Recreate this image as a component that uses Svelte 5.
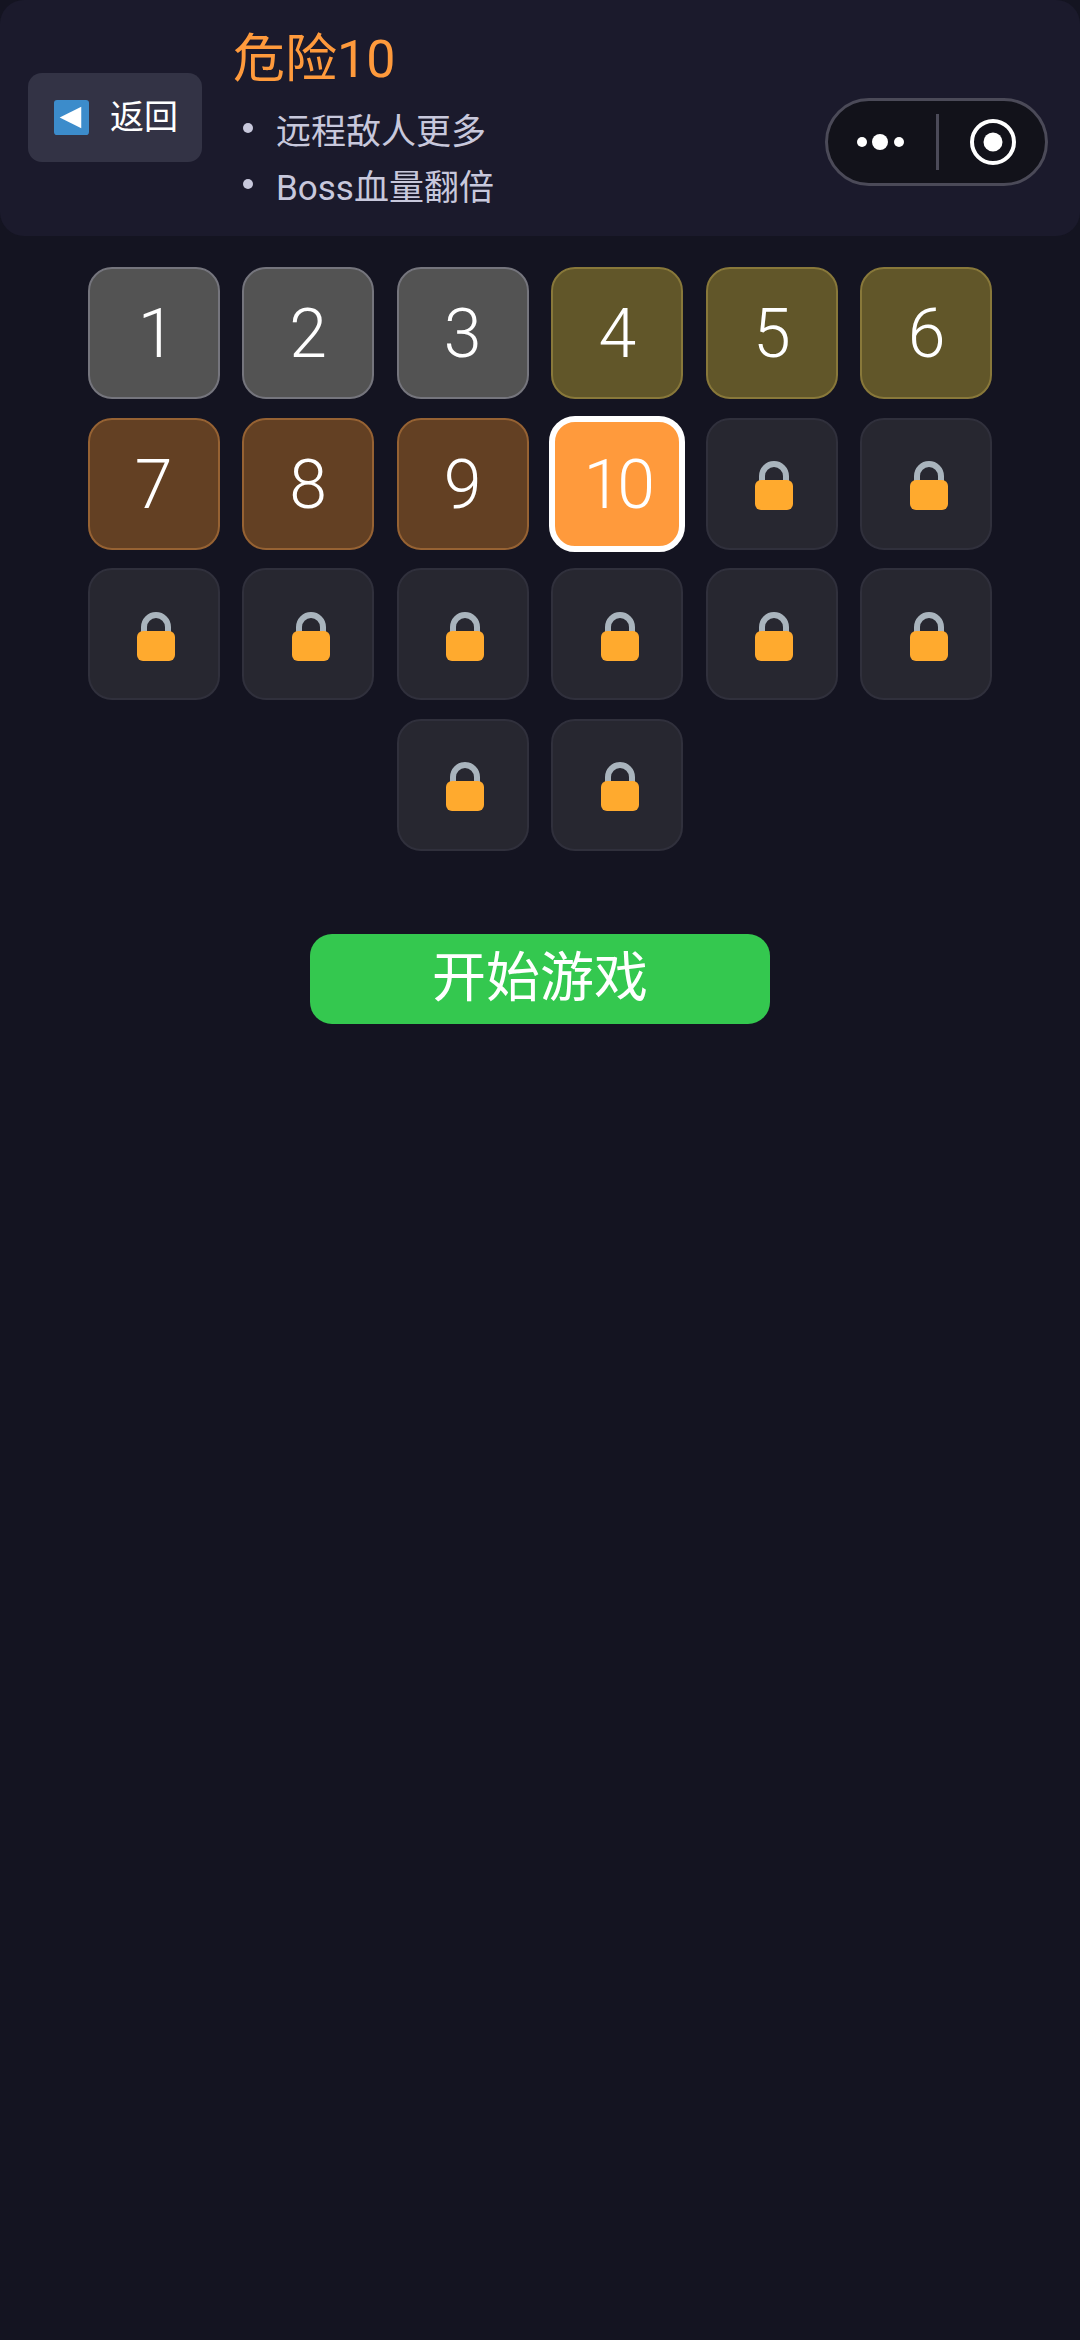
<script>
  const tiles = Array.from({ length: 20 }, (_, i) => {
    const n = i + 1;
    let kind = 'locked';
    if (n <= 3) kind = 'easy';
    else if (n <= 6) kind = 'mid';
    else if (n <= 9) kind = 'hard';
    else if (n === 10) kind = 'current';
    return { n, kind };
  });
</script>

<div class="page">
  <header class="head">
    <button class="back">
      <svg class="back-icon" viewBox="0 0 34 34" aria-hidden="true">
        <rect width="34" height="34" rx="3" fill="#3c8ccb" />
        <path d="M5.500 17 L26.500 6.500 V27.500 Z" fill="#fff" />
      </svg>
      <span>返回</span>
    </button>
    <div class="info">
      <h1>危险10</h1>
      <ul>
        <li>远程敌人更多</li>
        <li>Boss血量翻倍</li>
      </ul>
    </div>
    <div class="capsule">
      <svg class="dots" viewBox="0 0 50 16" aria-hidden="true">
        <circle cx="5" cy="8" r="5" fill="#fff" />
        <circle cx="23" cy="8" r="8" fill="#fff" />
        <circle cx="42" cy="8" r="5" fill="#fff" />
      </svg>
      <span class="divider"></span>
      <svg class="ring" viewBox="0 0 46 46" aria-hidden="true">
        <circle cx="23" cy="23" r="21" fill="none" stroke="#fff" stroke-width="4" />
        <circle cx="23" cy="23" r="9.500" fill="#fff" />
      </svg>
    </div>
  </header>

  <section class="grid">
    {#each tiles as t}
      <div class="tile {t.kind}" class:one={t.n === 1}>
        {#if t.kind === 'locked'}
          <svg class="lock" viewBox="0 0 40 50" aria-hidden="true">
            <path d="M8 24 V15 A12 12 0 0 1 32 15 V24" fill="none" stroke="#a9b4bd" stroke-width="6" />
            <rect x="1" y="19" width="38" height="30" rx="6" fill="#ffaa2e" />
          </svg>
        {:else}
          {t.n}
        {/if}
      </div>
    {/each}
  </section>

  <div class="actions">
    <button class="start">开始游戏</button>
  </div>
</div>

<style>
  :global(body) {
    margin: 0;
    background: #141421;
  }
  .page {
    position: relative;
    width: 1080px;
    height: 2340px;
    background: #141421;
    font-family: Roboto, "Noto Sans CJK SC", sans-serif;
    overflow: hidden;
  }
  .head {
    position: relative;
    display: flex;
    align-items: center;
    box-sizing: border-box;
    height: 236px;
    padding: 0 28px;
    background: #1b1a2c;
    border-radius: 24px;
  }
  .back {
    display: flex;
    align-items: center;
    gap: 21px;
    box-sizing: border-box;
    width: 174px;
    height: 89px;
    margin-top: -2px;
    padding: 0 0 0 26px;
    border: 0;
    border-radius: 14px;
    background: #333345;
    color: #fff;
    font: 400 34px/1 Roboto, "Noto Sans CJK SC", sans-serif;
  }
  .back-icon {
    width: 35px;
    height: 35px;
    flex: none;
  }
  .info {
    margin-left: 31px;
    color: #c8c8dc;
  }
  h1 {
    margin: 0 0 4px;
    font-size: 52px;
    font-weight: 400;
    line-height: 72px;
    color: #ff9a3c;
  }
  ul {
    margin: 0;
    padding: 0;
    list-style: none;
  }
  li {
    display: flex;
    align-items: center;
    height: 56px;
    font-size: 35px;
    font-weight: 400;
    margin-left: 10px;
  }
  li::before {
    content: "";
    width: 10px;
    height: 10px;
    margin-right: 23px;
    border-radius: 50%;
    background: #c8c8dc;
  }
  .capsule {
    position: absolute;
    left: 825px;
    top: 98px;
    display: flex;
    align-items: center;
    box-sizing: border-box;
    width: 223px;
    height: 88px;
    border: 3px solid #4b4a58;
    border-radius: 44px;
    background: #12121a;
  }
  .dots {
    width: 50px;
    height: 16px;
    margin-left: 29px;
  }
  .divider {
    width: 3px;
    height: 56px;
    margin-left: 29px;
    background: #4b4a58;
  }
  .ring {
    width: 46px;
    height: 46px;
    margin-left: 31px;
  }
  .grid {
    display: flex;
    flex-wrap: wrap;
    justify-content: center;
    gap: 18.600px 22.600px;
    padding: 31px 87px 0;
  }
  .tile {
    display: flex;
    align-items: center;
    justify-content: center;
    box-sizing: border-box;
    width: 132px;
    height: 132px;
    padding-top: 2px;
    border: 2px solid;
    border-radius: 24px;
    color: #fff;
    font-size: 68px;
    font-weight: 350;
    line-height: 1;
  }
  .one {
    padding-left: 6px;
  }
  .easy {
    background: #535353;
    border-color: #75757d;
  }
  .mid {
    background: #615629;
    border-color: #88783a;
  }
  .hard {
    background: #634023;
    border-color: #966233;
  }
  .current {
    width: 136px;
    height: 136px;
    margin: -2px;
    border: 6px solid #fff;
    border-radius: 26px;
    background: #ff9a3c;
    letter-spacing: -4px;
  }
  .locked {
    padding-top: 0;
    background: #272730;
    border-color: #30303c;
  }
  .lock {
    width: 40px;
    height: 50px;
    margin: 5px 0 0 5px;
  }
  .actions {
    display: flex;
    justify-content: center;
    margin-top: 83px;
  }
  .start {
    width: 460px;
    height: 90px;
    padding: 0;
    border: 0;
    border-radius: 22px;
    background: #34c84f;
    color: #fff;
    font: 400 54px/90px Roboto, "Noto Sans CJK SC", sans-serif;
  }
</style>
